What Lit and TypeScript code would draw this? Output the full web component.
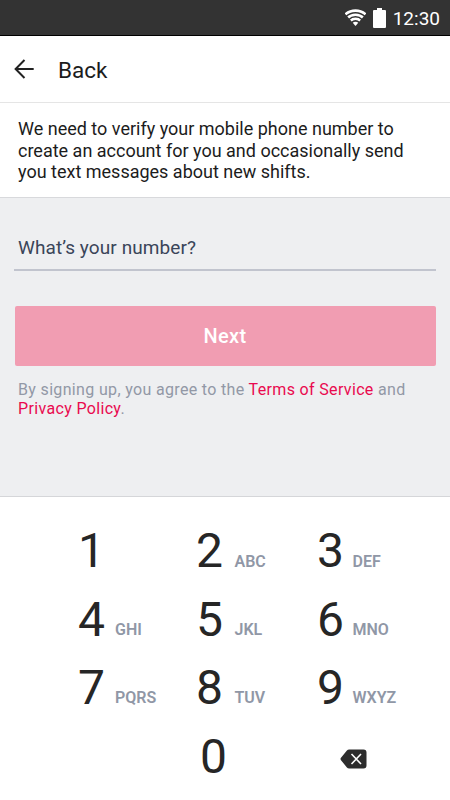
import { LitElement, html, css, svg } from "lit";
import { customElement } from "lit/decorators.js";

const KEYS: [string, string][][] = [
  [["1", ""], ["2", "ABC"], ["3", "DEF"]],
  [["4", "GHI"], ["5", "JKL"], ["6", "MNO"]],
  [["7", "PQRS"], ["8", "TUV"], ["9", "WXYZ"]],
];

const wifiBand = (r: number) => svg`<circle cx="10.5" cy="17" r=${r} fill="none" stroke="#fff" stroke-width="2.6" />`;

@customElement("status-bar")
class StatusBar extends LitElement {
  static styles = css`
    :host { display: flex; align-items: center; justify-content: flex-end; box-sizing: border-box;
      height: 36px; padding-right: 10px; background: #333; border-bottom: 1px solid #000; color: #fff; }
    .wifi { margin-right: 7px; }
    .battery { margin-right: 7px; }
    .time { font-size: 19px; line-height: 22px; padding-top: 3px; }
  `;
  render() {
    return html`
      <svg class="wifi" width="21" height="17" viewBox="0 0 21 17">
        <clipPath id="fan"><path d="M10.5 17L-.5 4.2V0H21.5V4.2Z" /></clipPath>
        <g clip-path="url(#fan)">
          <circle cx="10.5" cy="17" r="4.3" fill="#fff" />
          ${[7.2, 11.3, 15.4].map(wifiBand)}
        </g>
      </svg>
      <svg class="battery" width="13" height="20" viewBox="0 0 13 20">
        <path d="M4 0H9V2H12Q13 2 13 3V19Q13 20 12 20H1Q0 20 0 19V3Q0 2 1 2H4Z" fill="#fff" />
      </svg>
      <span class="time">12:30</span>
    `;
  }
}

@customElement("key-pad")
class KeyPad extends LitElement {
  static styles = css`
    :host { display: block; flex: 1; background: #fff; border-top: 1px solid #d5d6d9; padding: 20px 0 0 78px; }
    .row { display: grid; grid-template-columns: 118px 121px 1fr; height: 68.7px; }
    .key { display: flex; align-items: baseline; }
    .digit { font-size: 48px; line-height: 68px; width: 27px; color: #262626; }
    .letters { font-size: 16px; font-weight: 600; color: #9097a6; margin-left: 10px; }
    .key:nth-child(2) .letters { margin-left: 11.5px; }
    .key:nth-child(3) .letters { margin-left: 8.5px; }
    .row:not(:first-of-type) .letters { transform: translateY(-1px); }
    .zero { padding-left: 4px; }
    .erase { align-items: center; padding: 4px 0 0 23px; }
  `;
  render() {
    return html`
      ${KEYS.map((row) => html`<div class="row">
        ${row.map(([digit, letters]) => html`<div class="key">
          <span class="digit">${digit}</span><span class="letters">${letters}</span>
        </div>`)}
      </div>`)}
      <div class="row">
        <div class="key"></div>
        <div class="key zero"><span class="digit">0</span></div>
        <div class="key erase">
          <svg width="27" height="20" viewBox="0 0 27 20">
            <path d="M9.2 .5H23.5Q26.5 .5 26.5 3.5V16.5Q26.5 19.5 23.5 19.5H9.2Q7.8 19.5 6.9 18.4L1 11.2Q0 10 1 8.8L6.9 1.6Q7.8 .5 9.2 .5Z" fill="#2d2d2d" />
            <path d="M11.5 5L21 15M21 5L11.5 15" stroke="#fff" stroke-width="1.6" />
          </svg>
        </div>
      </div>
    `;
  }
}

@customElement("app-root")
class AppRoot extends LitElement {
  static styles = css`
    :host { display: flex; flex-direction: column; height: 800px; overflow: hidden; background: #fff;
      font-family: Roboto, "Liberation Sans", sans-serif; }
    .bar { display: flex; align-items: center; box-sizing: border-box; height: 67px;
      padding-left: 14px; border-bottom: 1px solid #e5e5e5; }
    .title { margin-left: 24px; font-size: 22.5px; line-height: 28px; color: #1c1c1c; padding-top: 1px; }
    .intro { box-sizing: border-box; height: 95px; padding: 15px 40px 0 18px; border-bottom: 1px solid #d8d9dc;
      font-size: 18px; line-height: 21.5px; color: #1c1c1c; }
    .form { box-sizing: border-box; height: 298px; padding: 35px 14px 0; background: #eeeff1; }
    .field { box-sizing: border-box; height: 38px; padding: 4px 4px 0; border-bottom: 2px solid #c1c4ce;
      font-size: 19px; line-height: 22px; color: #3a4559; letter-spacing: .1px; }
    .next { display: flex; align-items: center; justify-content: center; height: 60px; margin: 35px .5px 0;
      border-radius: 2px; background: #f19db2; color: #fff; font-size: 20px; font-weight: 500; letter-spacing: .3px; }
    .legal { margin: 14px 0 0 4px; font-size: 16px; line-height: 19px; color: #9298a6; letter-spacing: .34px; }
    .link { color: #e90a4f; }
  `;
  render() {
    return html`
      <status-bar></status-bar>
      <div class="bar">
        <svg width="20" height="20" viewBox="0 0 20 20" fill="none" stroke="#222" stroke-width="2">
          <path d="M10.5 1L1.6 10L10.5 19M1.6 10H19.7" />
        </svg>
        <span class="title">Back</span>
      </div>
      <div class="intro">We need to verify your mobile phone number to create an account for you and occasionally send you text messages about new shifts.</div>
      <div class="form">
        <div class="field">What’s your number?</div>
        <div class="next">Next</div>
        <div class="legal">By signing up, you agree to the <span class="link">Terms of Service</span> and<br><span class="link">Privacy Policy</span>.</div>
      </div>
      <key-pad></key-pad>
    `;
  }
}
